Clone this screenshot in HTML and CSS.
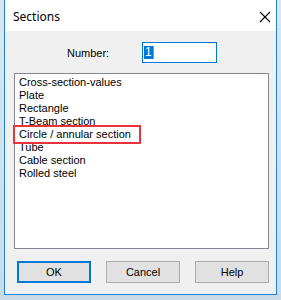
FILE: index.html
```html
<!DOCTYPE html>
<html lang="en">
<head>
    <meta charset="UTF-8">
    <title>Sections</title>
    <link rel="stylesheet" href="styles.css">
</head>
<body>

<div class="window">
    <div class="titlebar">
        <span class="title">Sections</span>
        <svg class="close" width="12" height="12" viewBox="0 0 12 12">
            <path d="M1 1 L11 11 M11 1 L1 11" stroke="#000" stroke-width="1.1" fill="none"/>
        </svg>
    </div>

    <div class="content">
        <div class="number-row">
            <label for="number">Number:</label>
            <div class="number-input"><span class="sel">1</span><span class="caret"></span></div>
        </div>

        <ul class="list">
            <li>Cross-section-values</li>
            <li>Plate</li>
            <li>Rectangle</li>
            <li>T-Beam section</li>
            <li class="marked">Circle / annular section</li>
            <li>Tube</li>
            <li>Cable section</li>
            <li>Rolled steel</li>
        </ul>

        <div class="buttons">
            <button class="default">OK</button>
            <button>Cancel</button>
            <button>Help</button>
        </div>
    </div>
</div>

</body>
</html>
```

FILE: styles.css
```css
html, body {
    margin: 0;
    height: 300px;
    overflow: hidden;
}
body {
    background: linear-gradient(#dbe6ef, #c9dbe8);
    font-family: "Liberation Sans", Arial, sans-serif;
    font-size: 11px;
    color: #000;
}
.window {
    margin-left: 4px;
    width: 271px;
    height: 294px;
    border: 1px solid #1883d7;
    border-top: none;
    background: #f0f0f0;
}
.titlebar {
    height: 31px;
    background: #fff;
    display: flex;
    align-items: center;
    justify-content: space-between;
    padding: 0 4px 0 8px;
}
.title {
    font-family: "Noto Sans", "Open Sans", sans-serif;
    font-size: 12px;
    margin-top: 2px;
}
.close {
    margin-right: 1px;
    margin-top: 2px;
}
.content {
    padding: 11px 0 0 9px;
}
.number-row {
    display: flex;
    align-items: center;
    height: 21px;
}
.number-row label {
    margin-left: 53px;
    width: 75px;
}
.number-input {
    box-sizing: border-box;
    width: 75px;
    height: 21px;
    border: 1px solid #0078d7;
    background: #fff;
    display: flex;
    align-items: center;
    padding-left: 1px;
}
.sel {
    background: #0078d7;
    color: #fff;
    font-size: 12px;
    line-height: 13px;
    padding: 0 1px;
}
.caret {
    width: 1px;
    height: 13px;
    background: #e0812c;
}
.list {
    box-sizing: border-box;
    list-style: none;
    margin: 10px 0 0 0;
    padding: 2px 0 0 0;
    width: 255px;
    height: 176px;
    border: 1px solid #828790;
    background: #fff;
}
.list li {
    height: 13px;
    line-height: 13px;
    padding-left: 4px;
}
.list li.marked {
    outline: 2px solid #e8333a;
    outline-offset: 1px;
    width: 119px;
    margin-left: 1px;
    padding-left: 3px;
}
.buttons {
    display: flex;
    gap: 15px;
    margin-top: 12px;
    padding-left: 3px;
}
.buttons button {
    box-sizing: border-box;
    width: 74px;
    height: 22px;
    background: #e1e1e1;
    border: 1px solid #adadad;
    font-family: "Liberation Sans", Arial, sans-serif;
    font-size: 11px;
    color: #000;
    padding: 0;
}
.buttons button.default {
    border: 2px solid #0078d7;
}
```
